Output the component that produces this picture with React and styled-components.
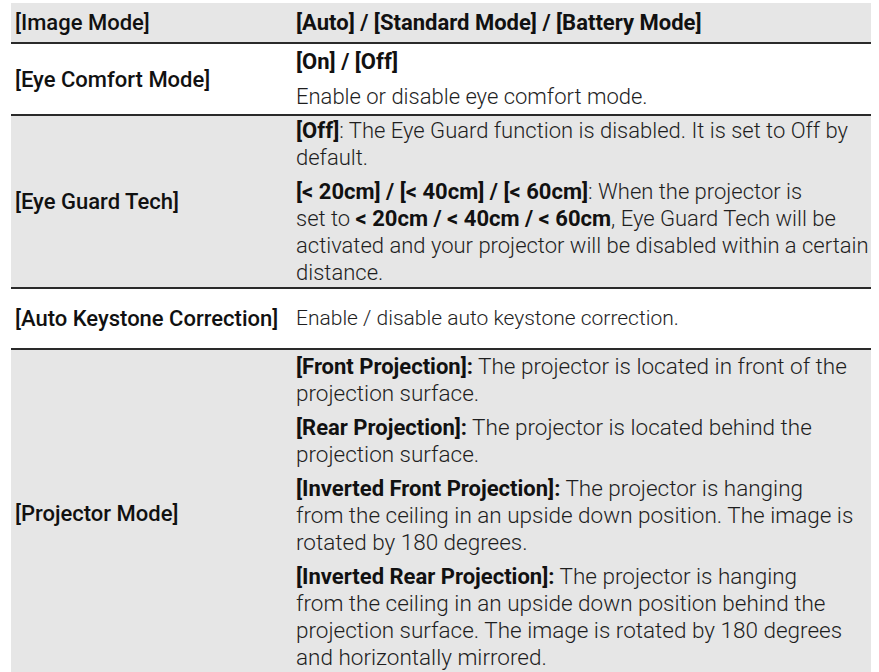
import React from "react";
import styled, { createGlobalStyle } from "styled-components";

const Global = createGlobalStyle`
  html, body { margin: 0; padding: 0; background: #ffffff; }
  body { font-family: Roboto, "Noto Sans", sans-serif; }
`;

const Table = styled.div`
  margin: 3px 0 0 11px;
  width: 860px;
  display: flex;
  flex-direction: column;
`;

const Row = styled.div`
  box-sizing: border-box;
  display: grid;
  grid-template-columns: 277px 1fr;
  background: ${(p) => (p.$shade ? "#e6e6e6" : "#ffffff")};
  border-bottom: 2px solid #2a2a2a;
  min-height: ${(p) => p.$h || 0}px;
`;

const Label = styled.div`
  display: flex;
  align-items: center;
  padding-left: 4px;
  font-family: Roboto, sans-serif;
  font-weight: 500;
  font-size: 22px;
  color: #111;
  white-space: nowrap;
`;

const Cell = styled.div`
  display: flex;
  flex-direction: column;
  justify-content: ${(p) => (p.$top ? "flex-start" : "center")};
  gap: ${(p) => p.$gap || 7}px;
  padding: ${(p) => p.$pad || "0"} 0 ${(p) => p.$padB || "0"} 8px;
  font-size: ${(p) => p.$size || 22}px;
`;

const Para = styled.p`
  margin: 0;
  font-family: Roboto, sans-serif;
  font-weight: 300;
  font-size: inherit;
  line-height: 27px;
  color: #1e1e1e;
  white-space: nowrap;
`;

const Strong = styled.span`
  font-family: Roboto, sans-serif;
  font-weight: 700;
  font-size: 22px;
  color: #111;
`;

export default function App() {
  return (
    <>
      <Global />
      <Table>
        <Row $shade $h={41}>
          <Label>[Image Mode]</Label>
          <Cell>
            <Para>
              <Strong>[Auto] / [Standard Mode] / [Battery Mode]</Strong>
            </Para>
          </Cell>
        </Row>

        <Row $h={72}>
          <Label>[Eye Comfort Mode]</Label>
          <Cell $gap={8}>
            <Para>
              <Strong>[On] / [Off]</Strong>
            </Para>
            <Para>Enable or disable eye comfort mode.</Para>
          </Cell>
        </Row>

        <Row $shade $h={173}>
          <Label>[Eye Guard Tech]</Label>
          <Cell>
            <Para>
              <Strong>[Off]</Strong>: The Eye Guard function is disabled. It is set to Off by
              <br />
              default.
            </Para>
            <Para>
              <Strong>[&lt; 20cm] / [&lt; 40cm] / [&lt; 60cm]</Strong>: When the projector is
              <br />
              set to <Strong>&lt; 20cm / &lt; 40cm / &lt; 60cm</Strong>, Eye Guard Tech will be
              <br />
              activated and your projector will be disabled within a certain
              <br />
              distance.
            </Para>
          </Cell>
        </Row>

        <Row $h={61}>
          <Label>[Auto Keystone Correction]</Label>
          <Cell $size={21}>
            <Para>Enable / disable auto keystone correction.</Para>
          </Cell>
        </Row>

        <Row $shade>
          <Label>[Projector Mode]</Label>
          <Cell $top $pad="3px" $padB="6px" $size={22.5}>
            <Para>
              <Strong>[Front Projection]:</Strong> The projector is located in front of the
              <br />
              projection surface.
            </Para>
            <Para>
              <Strong>[Rear Projection]:</Strong> The projector is located behind the
              <br />
              projection surface.
            </Para>
            <Para>
              <Strong>[Inverted Front Projection]:</Strong> The projector is hanging
              <br />
              from the ceiling in an upside down position. The image is
              <br />
              rotated by 180 degrees.
            </Para>
            <Para>
              <Strong>[Inverted Rear Projection]:</Strong> The projector is hanging
              <br />
              from the ceiling in an upside down position behind the
              <br />
              projection surface. The image is rotated by 180 degrees
              <br />
              and horizontally mirrored.
            </Para>
          </Cell>
        </Row>
      </Table>
    </>
  );
}
